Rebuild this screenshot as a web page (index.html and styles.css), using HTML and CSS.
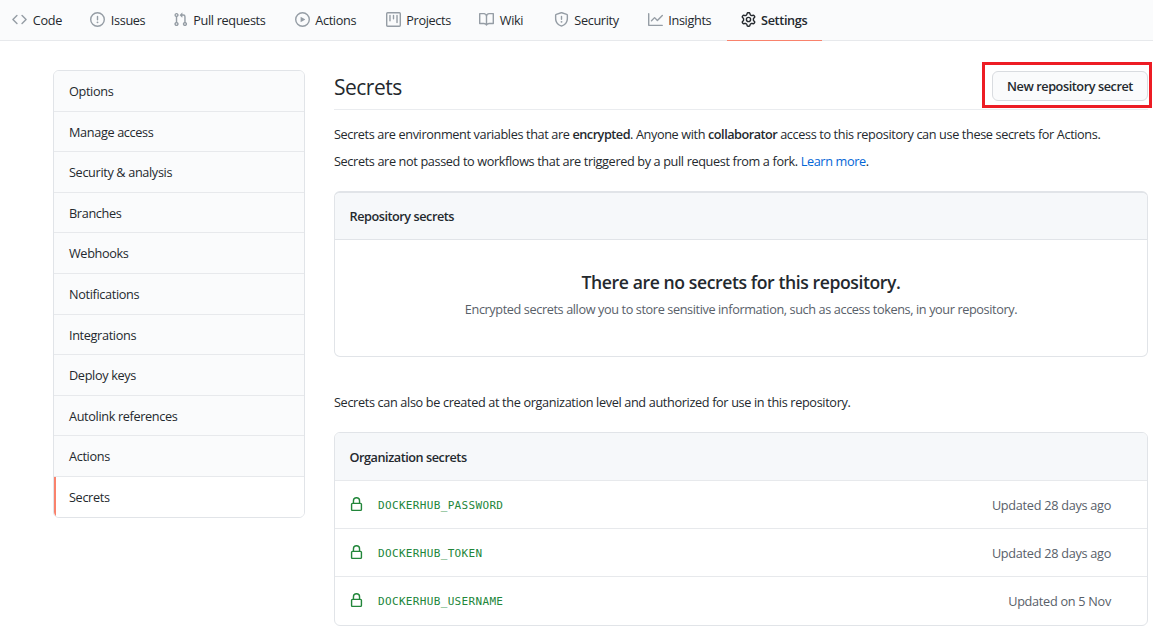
FILE: index.html
```html
<!DOCTYPE html>
<html lang="en">
<head>
<meta charset="utf-8">
<title>Secrets</title>
<link rel="stylesheet" href="styles.css">
</head>
<body>
<nav class="tabs">
  <a class="tab"><svg class="icon" viewBox="0 0 16 16"><path d="M4.72 3.22a.75.75 0 011.06 1.06L2.06 8l3.72 3.72a.75.75 0 11-1.06 1.06L.47 8.53a.75.75 0 010-1.06l4.25-4.25zm6.56 0a.75.75 0 10-1.06 1.06L13.94 8l-3.72 3.72a.75.75 0 101.06 1.06l4.25-4.25a.75.75 0 000-1.06l-4.25-4.25z"/></svg><span>Code</span></a>
  <a class="tab"><svg class="icon" viewBox="0 0 16 16"><path fill-rule="evenodd" d="M8 1.5a6.5 6.5 0 100 13 6.5 6.5 0 000-13zM0 8a8 8 0 1116 0A8 8 0 010 8zm9 3a1 1 0 11-2 0 1 1 0 012 0zm-.25-6.25a.75.75 0 00-1.5 0v3.5a.75.75 0 001.5 0v-3.5z"/></svg><span>Issues</span></a>
  <a class="tab"><svg class="icon" viewBox="0 0 16 16"><path fill-rule="evenodd" d="M7.177 3.073L9.573.677A.25.25 0 0110 .854v4.792a.25.25 0 01-.427.177L7.177 3.427a.25.25 0 010-.354zM3.75 2.5a.75.75 0 100 1.5.75.75 0 000-1.5zm-2.25.75a2.25 2.25 0 113 2.122v5.256a2.251 2.251 0 11-1.5 0V5.372A2.25 2.25 0 011.5 3.25zM11 2.5h-1V4h1a1 1 0 011 1v5.628a2.251 2.251 0 101.5 0V5A2.5 2.5 0 0011 2.5zm1 10.25a.75.75 0 111.5 0 .75.75 0 01-1.5 0zM3.75 12a.75.75 0 100 1.5.75.75 0 000-1.5z"/></svg><span>Pull requests</span></a>
  <a class="tab"><svg class="icon" viewBox="0 0 16 16"><path fill-rule="evenodd" d="M1.5 8a6.5 6.5 0 1113 0 6.5 6.5 0 01-13 0zM8 0a8 8 0 100 16A8 8 0 008 0zM6.379 5.227A.25.25 0 006 5.442v5.117a.25.25 0 00.379.214l4.264-2.559a.25.25 0 000-.428L6.379 5.227z"/></svg><span>Actions</span></a>
  <a class="tab"><svg class="icon" viewBox="0 0 16 16"><path fill-rule="evenodd" d="M1.75 0A1.75 1.75 0 000 1.75v12.5C0 15.216.784 16 1.75 16h12.5A1.75 1.75 0 0016 14.25V1.75A1.75 1.75 0 0014.25 0H1.75zM1.5 1.75a.25.25 0 01.25-.25h12.5a.25.25 0 01.25.25v12.5a.25.25 0 01-.25.25H1.75a.25.25 0 01-.25-.25V1.75zM11.75 3a.75.75 0 00-.75.75v7.5a.75.75 0 001.5 0v-7.5a.75.75 0 00-.75-.75zm-8.25.75a.75.75 0 011.5 0v5.5a.75.75 0 01-1.5 0v-5.5zM8 3a.75.75 0 00-.75.75v3.5a.75.75 0 001.5 0v-3.5A.75.75 0 008 3z"/></svg><span>Projects</span></a>
  <a class="tab"><svg class="icon" viewBox="0 0 16 16"><path fill-rule="evenodd" d="M0 1.75A.75.75 0 01.75 1h4.253c1.227 0 2.317.59 3 1.501A3.744 3.744 0 0111.006 1h4.245a.75.75 0 01.75.75v10.5a.75.75 0 01-.75.75h-4.507a2.25 2.25 0 00-1.591.659l-.622.621a.75.75 0 01-1.06 0l-.622-.621A2.25 2.25 0 005.258 13H.75a.75.75 0 01-.75-.75V1.75zm8.755 3a2.25 2.25 0 012.25-2.25H14.5v9h-3.757c-.71 0-1.4.201-1.992.572l.004-7.322zm-1.504 7.324l.004-5.073-.002-2.253A2.25 2.25 0 005.003 2.5H1.5v9h3.757a3.75 3.75 0 011.994.574z"/></svg><span>Wiki</span></a>
  <a class="tab"><svg class="icon" viewBox="0 0 16 16"><path fill-rule="evenodd" d="M7.467.133a1.75 1.75 0 011.066 0l5.25 1.68A1.75 1.75 0 0115 3.48V7c0 1.566-.32 3.182-1.303 4.682-.983 1.498-2.585 2.813-5.032 3.855a1.7 1.7 0 01-1.33 0c-2.447-1.042-4.049-2.357-5.032-3.855C1.32 10.182 1 8.566 1 7V3.48a1.75 1.75 0 011.217-1.667l5.25-1.68zm.61 1.429a.25.25 0 00-.153 0l-5.25 1.68a.25.25 0 00-.174.238V7c0 1.358.275 2.666 1.057 3.86.784 1.194 2.121 2.34 4.366 3.297a.2.2 0 00.154 0c2.245-.956 3.582-2.104 4.366-3.298C13.225 9.666 13.5 8.36 13.5 7V3.48a.25.25 0 00-.174-.237l-5.25-1.68zM9 10.5a1 1 0 11-2 0 1 1 0 012 0zm-.25-5.75a.75.75 0 10-1.5 0v3a.75.75 0 001.5 0v-3z"/></svg><span>Security</span></a>
  <a class="tab"><svg class="icon" viewBox="0 0 16 16"><path fill-rule="evenodd" d="M1.5 1.75a.75.75 0 00-1.5 0v12.5c0 .414.336.75.75.75h14.5a.75.75 0 000-1.5H1.5V1.75zm14.28 2.53a.75.75 0 00-1.06-1.06L10 7.94 7.53 5.47a.75.75 0 00-1.06 0L3.22 8.72a.75.75 0 001.06 1.06L7 7.06l2.47 2.47a.75.75 0 001.06 0l5.25-5.25z"/></svg><span>Insights</span></a>
  <a class="tab tab-active"><svg class="icon" viewBox="0 0 16 16"><path fill-rule="evenodd" d="M7.429 1.525a6.593 6.593 0 011.142 0c.036.003.108.036.137.146l.289 1.105c.147.56.55.967.997 1.189.174.086.341.183.501.29.417.278.97.423 1.53.27l1.102-.303c.11-.03.175.016.195.046.219.31.41.641.573.989.014.031.022.11-.059.19l-.815.806c-.411.406-.562.957-.53 1.456a4.588 4.588 0 010 .582c-.032.499.119 1.05.53 1.456l.815.806c.08.08.073.159.059.19a6.494 6.494 0 01-.573.99c-.02.029-.086.074-.195.045l-1.103-.303c-.559-.153-1.112-.008-1.529.27-.16.107-.327.204-.5.29-.449.222-.851.628-.998 1.189l-.289 1.105c-.029.11-.101.143-.137.146a6.613 6.613 0 01-1.142 0c-.036-.003-.108-.037-.137-.146l-.289-1.105c-.147-.56-.55-.967-.997-1.189a4.502 4.502 0 01-.501-.29c-.417-.278-.97-.423-1.53-.27l-1.102.303c-.11.03-.175-.016-.195-.046a6.492 6.492 0 01-.573-.989c-.014-.031-.022-.11.059-.19l.815-.806c.411-.406.562-.957.53-1.456a4.587 4.587 0 010-.582c.032-.499-.119-1.05-.53-1.456l-.815-.806c-.08-.08-.073-.159-.059-.19a6.44 6.44 0 01.573-.99c.02-.029.086-.075.195-.045l1.103.303c.559.153 1.112.008 1.529-.27.16-.107.327-.204.5-.29.449-.222.851-.628.998-1.189l.289-1.105c.029-.11.101-.143.137-.146zM8 0c-.236 0-.47.01-.701.03-.743.065-1.29.615-1.458 1.261l-.29 1.106c-.017.066-.078.158-.211.224a5.994 5.994 0 00-.668.386c-.123.082-.233.09-.3.071L3.27 2.776c-.644-.177-1.392.02-1.82.63a7.977 7.977 0 00-.704 1.217c-.315.675-.111 1.422.363 1.891l.815.806c.05.048.098.147.088.294a6.084 6.084 0 000 .772c.01.147-.038.246-.088.294l-.815.806c-.474.469-.678 1.216-.363 1.891.2.428.436.835.704 1.218.428.609 1.176.806 1.82.63l1.103-.303c.066-.019.176-.011.299.071.213.143.436.272.668.386.133.066.194.158.212.224l.289 1.106c.169.646.715 1.196 1.458 1.26a8.094 8.094 0 001.402 0c.743-.064 1.29-.614 1.458-1.26l.29-1.106c.017-.066.078-.158.211-.224a5.98 5.98 0 00.668-.386c.123-.082.233-.09.3-.071l1.102.302c.644.177 1.392-.02 1.82-.63.268-.382.505-.789.704-1.217.315-.675.111-1.422-.364-1.891l-.814-.806c-.05-.048-.098-.147-.088-.294a6.1 6.1 0 000-.772c-.01-.147.039-.246.088-.294l.814-.806c.475-.469.679-1.216.364-1.891a7.992 7.992 0 00-.704-1.218c-.428-.609-1.176-.806-1.82-.63l-1.103.303c-.066.019-.176.011-.299-.071a5.991 5.991 0 00-.668-.386c-.133-.066-.194-.158-.212-.224L10.16 1.29C9.99.645 9.444.095 8.701.031A8.094 8.094 0 008 0zm1.5 8a1.5 1.5 0 11-3 0 1.5 1.5 0 013 0zM11 8a3 3 0 11-6 0 3 3 0 016 0z"/></svg><span>Settings</span></a>
</nav>
<div class="page">
  <aside class="menu">
    <a class="menu-item">Options</a>
    <a class="menu-item">Manage access</a>
    <a class="menu-item">Security &amp; analysis</a>
    <a class="menu-item">Branches</a>
    <a class="menu-item">Webhooks</a>
    <a class="menu-item">Notifications</a>
    <a class="menu-item">Integrations</a>
    <a class="menu-item">Deploy keys</a>
    <a class="menu-item">Autolink references</a>
    <a class="menu-item">Actions</a>
    <a class="menu-item menu-current">Secrets</a>
  </aside>
  <main class="content">
    <header class="subhead">
      <h2 class="title">Secrets</h2>
      <div class="highlight"><button class="btn">New repository secret</button></div>
    </header>
    <p class="text intro">Secrets are environment variables that are <b>encrypted</b>. Anyone with <b>collaborator</b> access to this repository can use these secrets for Actions.</p>
    <p class="text forks">Secrets are not passed to workflows that are triggered by a pull request from a fork. <a class="link">Learn more</a>.</p>
    <section class="box box-repo">
      <h3 class="box-head">Repository secrets</h3>
      <div class="blank">
        <h3 class="blank-title">There are no secrets for this repository.</h3>
        <p class="blank-text">Encrypted secrets allow you to store sensitive information, such as access tokens, in your repository.</p>
      </div>
    </section>
    <p class="text org-note">Secrets can also be created at the organization level and authorized for use in this repository.</p>
    <section class="box box-org">
      <h3 class="box-head">Organization secrets</h3>
      <div class="row"><svg class="lock" viewBox="0 0 16 16"><path fill-rule="evenodd" d="M4 4v2h-.25A1.75 1.75 0 002 7.75v5.5c0 .966.784 1.75 1.75 1.75h8.5A1.75 1.75 0 0014 13.25v-5.5A1.75 1.75 0 0012.25 6H12V4a4 4 0 10-8 0zm6.5 2V4a2.5 2.5 0 10-5 0v2h5zM12 7.5h.25a.25.25 0 01.25.25v5.5a.25.25 0 01-.25.25h-8.5a.25.25 0 01-.25-.25v-5.5a.25.25 0 01.25-.25H12z"/></svg><code class="name">DOCKERHUB_PASSWORD</code><span class="when">Updated 28 days ago</span></div>
      <div class="row"><svg class="lock" viewBox="0 0 16 16"><path fill-rule="evenodd" d="M4 4v2h-.25A1.75 1.75 0 002 7.75v5.5c0 .966.784 1.75 1.75 1.75h8.5A1.75 1.75 0 0014 13.25v-5.5A1.75 1.75 0 0012.25 6H12V4a4 4 0 10-8 0zm6.5 2V4a2.5 2.5 0 10-5 0v2h5zM12 7.5h.25a.25.25 0 01.25.25v5.5a.25.25 0 01-.25.25h-8.5a.25.25 0 01-.25-.25v-5.5a.25.25 0 01.25-.25H12z"/></svg><code class="name">DOCKERHUB_TOKEN</code><span class="when">Updated 28 days ago</span></div>
      <div class="row"><svg class="lock" viewBox="0 0 16 16"><path fill-rule="evenodd" d="M4 4v2h-.25A1.75 1.75 0 002 7.75v5.5c0 .966.784 1.75 1.75 1.75h8.5A1.75 1.75 0 0014 13.25v-5.5A1.75 1.75 0 0012.25 6H12V4a4 4 0 10-8 0zm6.5 2V4a2.5 2.5 0 10-5 0v2h5zM12 7.5h.25a.25.25 0 01.25.25v5.5a.25.25 0 01-.25.25h-8.5a.25.25 0 01-.25-.25v-5.5a.25.25 0 01.25-.25H12z"/></svg><code class="name">DOCKERHUB_USERNAME</code><span class="when">Updated on 5 Nov</span></div>
    </section>
  </main>
</div>
</body>
</html>
```
FILE: styles.css
```css
* { box-sizing: border-box; }
body {
  margin: 0;
  height: 632px;
  overflow: hidden;
  background: #fff;
  color: #24292e;
  font: 12.7px/20px "Open Sans", "Noto Sans", sans-serif;
  letter-spacing: -0.35px;
}
h2, h3, p { margin: 0; font-weight: 400; }
b { font-weight: 600; letter-spacing: -0.5px; }

.tabs {
  display: grid;
  grid-template-columns: 78px 82.5px 122px 91px 93.5px 74.5px 94px 93.5px 95px;
  height: 41px;
  background: #fafbfc;
  border-bottom: 1px solid #e7e9ec;
}
.tab {
  display: flex;
  height: 41px;
  padding: 10px 0 0 12px;
}
.tab-active { margin-left: -2px; padding-left: 14px; width: 95px; border-bottom: 1px solid #f9826c; font-weight: 600; }
.icon { flex: none; width: 15px; height: 15px; margin: 1.5px 5.8px 0 0; fill: #959da5; }
.tab-active .icon { fill: #24292e; margin-right: 5px; }

.page { display: grid; grid-template-columns: 252px 814px; column-gap: 29px; padding: 29px 5px 0 53px; }
.menu { height: 448px; display: grid; grid-auto-rows: 40.61px; border: 1px solid #e1e4e8; border-radius: 6px; overflow: hidden; }
.menu-item { padding: 10px 15px; background: #fafbfc; border-bottom: 1px solid #e7e9ec; }
.menu-current { background: #fff; border-left: 2px solid #f9826c; padding-left: 13px; border-bottom: 0; }

.content { display: flex; flex-direction: column; }
.subhead { display: flex; justify-content: space-between; height: 40px; border-bottom: 1px solid #eaecef; }
.title { font-size: 21px; line-height: 35px; letter-spacing: -0.5px; }
.highlight { width: 170px; height: 46px; margin: -8px -4px 0 0; border: 3px solid #ed1c24; padding: 6px 1px 0 7px; position: relative; }
.btn { display: block; width: 156px; height: 30px; margin: 0; padding: 0; border: 1px solid #d9dce0; border-radius: 6px; background: #fafbfc; color: #24292e; font: inherit; font-weight: 600; letter-spacing: -0.43px; line-height: 27px; }
.text { white-space: nowrap; }
.intro { margin-top: 14px; letter-spacing: -0.375px; }
.forks { margin-top: 7px; letter-spacing: -0.365px; }
.link { color: #0366d6; }
.box { border: 1px solid #e1e4e8; border-radius: 6px; overflow: hidden; }
.box-repo { height: 166px; margin-top: 20px; border-top-width: 2px; }
.box-head { height: 47px; padding: 14px 14.5px; background: #f6f8fa; font-size: inherit; font-weight: 600; letter-spacing: -0.46px; }
.box-repo .box-head { height: 46px; padding-top: 13px; }
.blank { border-top: 1px solid #e1e4e8; padding-top: 30px; text-align: center; }
.blank-title { font-size: 17.6px; line-height: 25px; font-weight: 600; letter-spacing: -0.41px; }
.blank-text { margin-top: 4px; color: #586069; letter-spacing: -0.39px; }
.org-note { margin-top: 35px; margin-bottom: 20px; letter-spacing: -0.35px; }
.box-org { height: 194px; }
.row { display: flex; align-items: center; height: 48px; padding: 0 36px 0 14px; border-top: 1px solid #e7e9ec; }
.lock { width: 15px; height: 15px; fill: #22863a; margin-right: 14px; }
.name { color: #22863a; font: 11px/20px "DejaVu Sans Mono", monospace; letter-spacing: 0.34px; margin-top: 2px; }
.when { margin-left: auto; color: #586069; letter-spacing: -0.28px; }
```
